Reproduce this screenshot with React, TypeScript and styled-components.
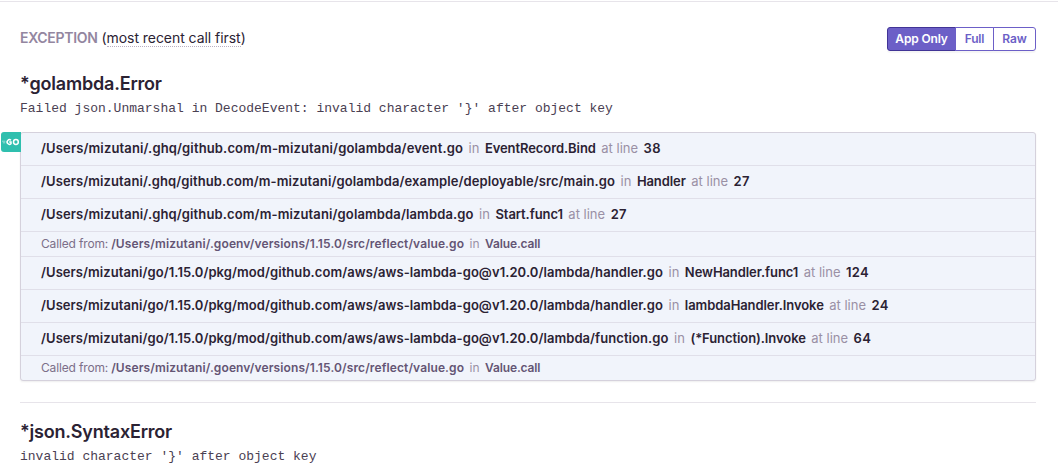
import React from 'react';
import styled, { createGlobalStyle } from 'styled-components';

const Global = createGlobalStyle`
  html, body { margin: 0; padding: 0; background: #fff; }
  body { font-family: Inter, "Liberation Sans", sans-serif; color: #2b2233; }
`;

const Page = styled.div`
  width: 1058px;
  height: 473px;
  overflow: hidden;
  box-sizing: border-box;
  border-top: 1px solid #e7e4ea;
  margin-top: 1px;
  padding: 0 22px 0 20px;
`;

const Header = styled.div`
  display: flex;
  justify-content: space-between;
  align-items: center;
  height: 24px;
  margin-top: 24px;
`;

const Title = styled.div`
  font-size: 14px;
  line-height: 24px;
  color: #2b2233;
  font-weight: 400;
  letter-spacing: -0.05px;
`;

const Label = styled.span`
  color: #9386a0;
  font-weight: 600;
  letter-spacing: -0.3px;
`;

const Dotted = styled.span`
  border-bottom: 1px dotted #b9b0c2;
`;

const ButtonBar = styled.div`
  display: flex;
  height: 24px;
  margin-top: 1px;
  box-shadow: 0 2px 1px rgba(0, 0, 0, 0.04);
  border-radius: 3px;
`;

const ToggleButton = styled.div<{ $active?: boolean; $width: number }>`
  width: ${(p) => p.$width}px;
  box-sizing: border-box;
  display: flex;
  align-items: center;
  justify-content: center;
  font-size: 12px;
  font-weight: 600;
  letter-spacing: -0.15px;
  color: ${(p) => (p.$active ? '#fff' : '#6c5fc7')};
  background: ${(p) => (p.$active ? '#6c5fc7' : '#fff')};
  border: 1px solid ${(p) => (p.$active ? '#413496' : '#6c5fc7')};
  margin-left: -1px;
  &:first-child { margin-left: 0; border-radius: 3px 0 0 3px; }
  &:last-child { border-radius: 0 3px 3px 0; }
`;

const ErrorType = styled.h3`
  margin: 22px 0 0;
  font-size: 18px;
  line-height: 24px;
  font-weight: 600;
  letter-spacing: -0.2px;
  color: #2b2233;
`;

const Message = styled.pre`
  margin: 3px 0 0;
  font-family: "Liberation Mono", monospace;
  font-size: 13px;
  line-height: 20px;
  color: #4a4052;
`;

const TraceWrap = styled.div`
  position: relative;
  margin-top: 13px;
`;

const Platform = styled.div`
  position: absolute;
  left: -19px;
  top: 0;
  width: 20px;
  height: 20px;
  background: #2fbfae;
  border-radius: 3px 0 0 3px;
  display: flex;
  align-items: center;
  justify-content: center;
`;

const Trace = styled.div`
  border: 1px solid #d5d1dc;
  border-radius: 3px;
  background: #f1f4fb;
  box-shadow: 0 1px 2px rgba(0, 0, 0, 0.07);
`;

const FrameRow = styled.div`
  height: 33px;
  box-sizing: border-box;
  display: flex;
  align-items: center;
  padding: 0 20px 2px;
  font-size: 13px;
  font-weight: 600;
  color: #2b2233;
  white-space: pre;
  border-bottom: 1px solid #e0dfe9;
`;

const FilePath = styled.span<{ $tracking: number }>`
  letter-spacing: ${(p) => p.$tracking}px;
`;

const CalledRow = styled.div<{ $last?: boolean }>`
  height: ${(p) => (p.$last ? 24 : 25)}px;
  box-sizing: border-box;
  display: flex;
  align-items: center;
  padding: 0 20px 1px;
  font-size: 12px;
  letter-spacing: 0.12px;
  font-weight: 600;
  color: #645574;
  white-space: pre;
  border-bottom: ${(p) => (p.$last ? 'none' : '1px solid #e0dfe9')};
`;

const Muted = styled.span`
  font-weight: 400;
  color: #9a90a5;
  letter-spacing: 0;
  margin: 0 5.5px;
`;

const Lead = styled.span`
  font-weight: 400;
  color: #7c6f89;
  letter-spacing: -0.15px;
  margin-right: 3px;
`;

const Name = styled.span<{ $called?: boolean }>`
  letter-spacing: ${(p) => (p.$called ? '-0.15px' : '-0.08px')};
`;

const Line = styled.span`
  letter-spacing: 0.3px;
`;

const Divider = styled.hr`
  border: 0;
  border-top: 1px solid #e7e4ea;
  margin: 21px 0 0;
`;

const SecondType = styled(ErrorType)`
  margin-top: 17px;
`;

const GoLogo = () => (
  <svg width="18" height="10" viewBox="0 0 18 10" aria-hidden="true">
    <path d="M0 4.2h3.4M.8 5.8h2.4" stroke="#fff" strokeWidth="0.7" opacity="0.7" />
    <path
      d="M9 3.3A2.3 2.3 0 1 0 9 6.7V5.1H7.2"
      fill="none"
      stroke="#fff"
      strokeWidth="1.5"
    />
    <circle cx="13.9" cy="5" r="2.4" fill="none" stroke="#fff" strokeWidth="1.5" />
  </svg>
);

type Frame = { file: string; fn: string; line: number; tracking: number };
type Called = { called: true; last?: boolean };

const frames: (Frame | Called)[] = [
  { file: '/Users/mizutani/.ghq/github.com/m-mizutani/golambda/event.go', fn: 'EventRecord.Bind', line: 38, tracking: 0.14 },
  { file: '/Users/mizutani/.ghq/github.com/m-mizutani/golambda/example/deployable/src/main.go', fn: 'Handler', line: 27, tracking: 0.1 },
  { file: '/Users/mizutani/.ghq/github.com/m-mizutani/golambda/lambda.go', fn: 'Start.func1', line: 27, tracking: 0.127 },
  { called: true },
  { file: '/Users/mizutani/go/1.15.0/pkg/mod/github.com/aws/aws-lambda-go@v1.20.0/lambda/handler.go', fn: 'NewHandler.func1', line: 124, tracking: 0.075 },
  { file: '/Users/mizutani/go/1.15.0/pkg/mod/github.com/aws/aws-lambda-go@v1.20.0/lambda/handler.go', fn: 'lambdaHandler.Invoke', line: 24, tracking: 0.075 },
  { file: '/Users/mizutani/go/1.15.0/pkg/mod/github.com/aws/aws-lambda-go@v1.20.0/lambda/function.go', fn: '(*Function).Invoke', line: 64, tracking: 0.075 },
  { called: true, last: true },
];

export default function App() {
  return (
    <>
      <Global />
      <Page>
        <Header>
          <Title>
            <Label>EXCEPTION</Label> (<Dotted>most recent call first</Dotted>)
          </Title>
          <ButtonBar>
            <ToggleButton $active $width={69}>App Only</ToggleButton>
            <ToggleButton $width={39}>Full</ToggleButton>
            <ToggleButton $width={43}>Raw</ToggleButton>
          </ButtonBar>
        </Header>
        <ErrorType>*golambda.Error</ErrorType>
        <Message>Failed json.Unmarshal in DecodeEvent: invalid character '{'}'}' after object key</Message>
        <TraceWrap>
          <Platform>
            <GoLogo />
          </Platform>
          <Trace>
            {frames.map((f, i) =>
              'called' in f ? (
                <CalledRow key={i} $last={f.last}>
                  <Lead>Called from:</Lead>/Users/mizutani/.goenv/versions/1.15.0/src/reflect/value.go
                  <Muted>in</Muted>
                  <Name $called>Value.call</Name>
                </CalledRow>
              ) : (
                <FrameRow key={i}>
                  <FilePath $tracking={f.tracking}>{f.file}</FilePath>
                  <Muted>in</Muted>
                  <Name>{f.fn}</Name>
                  <Muted>at line</Muted>
                  <Line>{f.line}</Line>
                </FrameRow>
              ),
            )}
          </Trace>
        </TraceWrap>
        <Divider />
        <SecondType>*json.SyntaxError</SecondType>
        <Message>invalid character '{'}'}' after object key</Message>
      </Page>
    </>
  );
}
